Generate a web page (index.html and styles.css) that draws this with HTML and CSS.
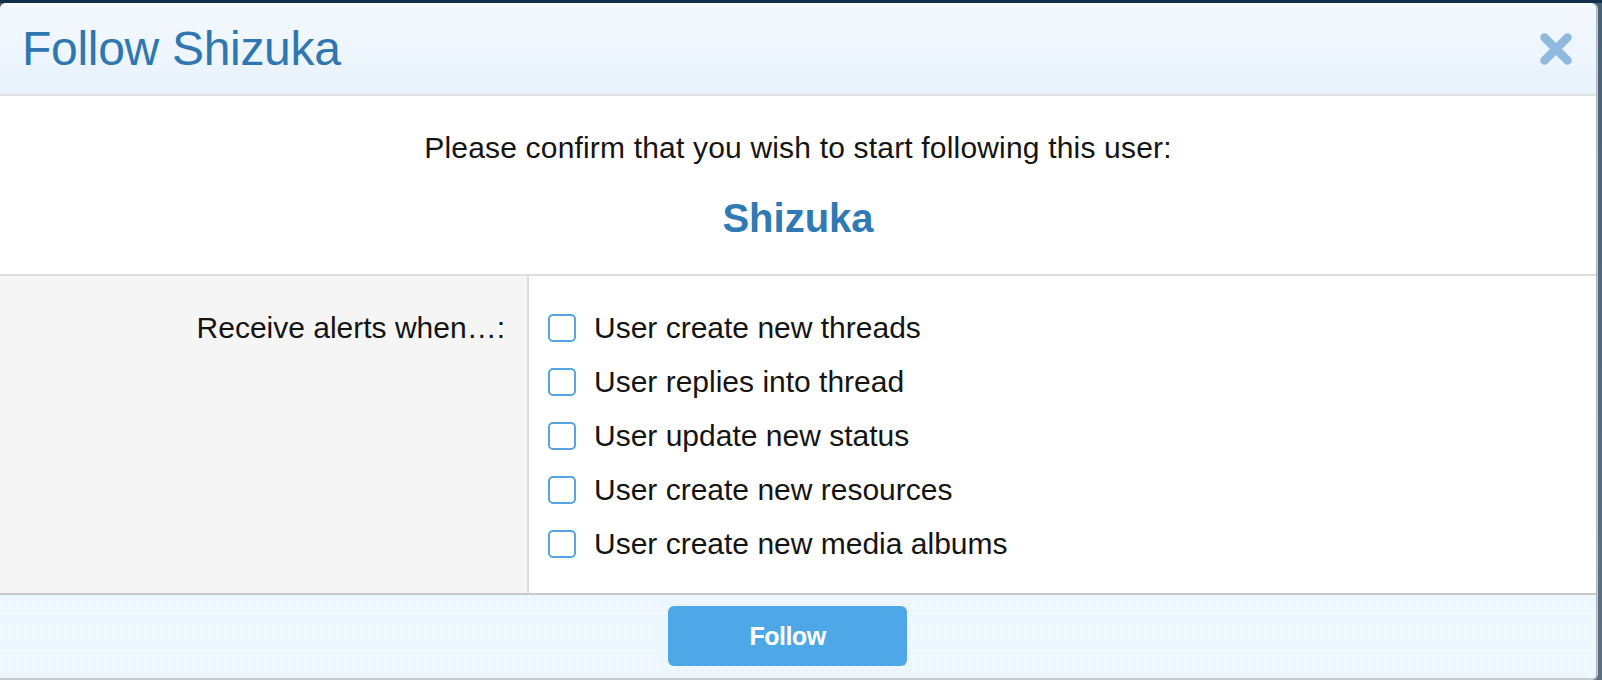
FILE: index.html
```html
<!DOCTYPE html>
<html lang="en">
<head>
<meta charset="utf-8">
<title>Follow Shizuka</title>
<link rel="stylesheet" href="styles.css">
</head>
<body>
<div class="overlay">
  <div class="dialog">
    <div class="dialog-header">
      <h2 class="dialog-title">Follow Shizuka</h2>
      <button class="close" aria-label="Close">
        <svg width="34" height="34" viewBox="0 0 34 34" aria-hidden="true">
          <line x1="5.5" y1="5.5" x2="28.5" y2="28.5" />
          <line x1="28.5" y1="5.5" x2="5.5" y2="28.5" />
        </svg>
      </button>
    </div>
    <div class="confirm">
      <p class="confirm-text">Please confirm that you wish to start following this user:</p>
      <p class="confirm-user">Shizuka</p>
    </div>
    <div class="form-row">
      <div class="form-label">Receive alerts when…:</div>
      <ul class="options">
        <li><label class="option"><input type="checkbox"><span>User create new threads</span></label></li>
        <li><label class="option"><input type="checkbox"><span>User replies into thread</span></label></li>
        <li><label class="option"><input type="checkbox"><span>User update new status</span></label></li>
        <li><label class="option"><input type="checkbox"><span>User create new resources</span></label></li>
        <li><label class="option"><input type="checkbox"><span>User create new media albums</span></label></li>
      </ul>
    </div>
    <div class="dialog-footer">
      <button class="btn-primary">Follow</button>
    </div>
  </div>
</div>
</body>
</html>
```

FILE: styles.css
```css
* { box-sizing: border-box; }

html, body {
  margin: 0;
  padding: 0;
  height: 100%;
}

body {
  background: #2c475f;
  font-family: "Liberation Sans", Arial, Helvetica, sans-serif;
  color: #141414;
  overflow: hidden;
}

.overlay {
  padding-top: 3px;
  background: linear-gradient(to bottom, #13304a 0, #13304a 3px, #4a6075 3px, #5d7082 100%);
  height: 100%;
}

.dialog {
  width: 1596px;
  background: #ffffff;
  border-radius: 6px 6px 6px 0;
  overflow: hidden;
  box-shadow: 1px 0 0 #a9b1b8, 2px 0 0 #c9ced2;
}

.dialog-header {
  display: flex;
  align-items: center;
  justify-content: space-between;
  padding: 18px 23px 17px 22px;
  background: linear-gradient(to bottom, #f4f9fe, #e8f2fc);
  border-bottom: 2px solid #dfe1e3;
}

.dialog-title {
  margin: 0;
  font-weight: normal;
  font-size: 48px;
  line-height: 56px;
  color: #2f77b1;
  letter-spacing: -0.3px;
}

.close {
  border: 0;
  background: none;
  padding: 0;
  width: 34px;
  height: 34px;
  cursor: pointer;
}

.close svg {
  display: block;
  stroke: #8fb9de;
  stroke-width: 8.5;
  stroke-linecap: round;
}

.confirm {
  padding: 34px 0 32px;
  text-align: center;
  border-bottom: 2px solid #dedede;
}

.confirm-text {
  margin: 0;
  font-size: 30px;
  line-height: 36px;
  letter-spacing: 0.18px;
}

.confirm-user {
  margin: 28px 0 0;
  font-size: 40px;
  line-height: 48px;
  font-weight: bold;
  color: #2f79b4;
}

.form-row {
  display: grid;
  grid-template-columns: 529px 1fr;
  height: 317px;
}

.form-label {
  background: #f5f5f5;
  border-right: 2px solid #dcdcdc;
  text-align: right;
  padding: 25px 22px 0 0;
  font-size: 30px;
  line-height: 54px;
}

.options {
  list-style: none;
  margin: 0;
  padding: 25px 0 0 19px;
}

.option {
  display: flex;
  align-items: center;
  height: 54px;
  font-size: 30px;
  line-height: 54px;
  cursor: pointer;
}

.option input {
  appearance: none;
  -webkit-appearance: none;
  margin: 0 18px 0 0;
  width: 28px;
  height: 28px;
  border: 2px solid #55a5e2;
  border-radius: 5px;
  background: #ffffff;
  flex: none;
}

.dialog-footer {
  display: flex;
  justify-content: center;
  padding: 11px 21px 12px 0;
  border-top: 2px solid #c8c9cb;
  border-bottom: 2px solid #c8c9cb;
  background-color: #eef6fe;
  background-image: radial-gradient(circle, #e3e9f0 0.6px, transparent 1px);
  background-size: 8px 11px;
  background-position: 2px 4px;
}

.btn-primary {
  width: 239px;
  height: 60px;
  border: 0;
  border-radius: 6px;
  background: #4ea8e8;
  color: #ffffff;
  font-family: "Liberation Sans", Arial, Helvetica, sans-serif;
  font-weight: bold;
  font-size: 25px;
  letter-spacing: -0.5px;
  cursor: pointer;
}
```
